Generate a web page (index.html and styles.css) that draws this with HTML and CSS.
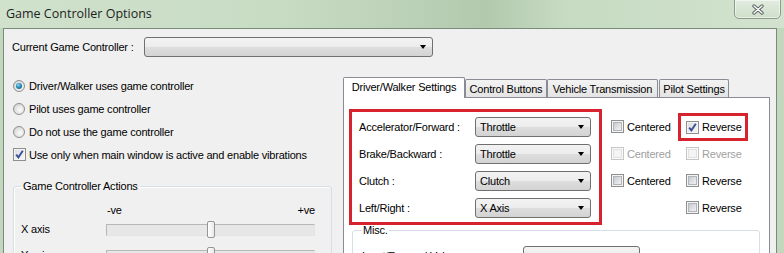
FILE: index.html
```html
<!DOCTYPE html>
<html lang="en">
<head>
    <meta charset="UTF-8">
    <title>Game Controller Options</title>
    <link rel="stylesheet" href="styles.css">
</head>
<body>
    <div class="titlebar">
        <span class="title">Game Controller Options</span>
        <button class="close" title="Close">
            <svg width="12" height="11" viewBox="0 0 12 11">
                <path d="M2 2 L10 9 M10 2 L2 9" stroke="#5b6360" stroke-width="3.4" stroke-linecap="round"/>
                <path d="M2 2 L10 9 M10 2 L2 9" stroke="#fff" stroke-width="1.4" stroke-linecap="round"/>
            </svg>
        </button>
    </div>

    <div class="client">
        <div class="controller-row">
            <label class="controller-label">Current Game Controller :</label>
            <div class="combo combo-wide"></div>
        </div>

        <div class="main">
            <div class="left">
                <div class="opt"><span class="radio on"></span>Driver/Walker uses game controller</div>
                <div class="opt"><span class="radio"></span>Pilot uses game controller</div>
                <div class="opt"><span class="radio"></span>Do not use the game controller</div>
                <div class="opt"><span class="chk on"><svg width="11" height="11" viewBox="0 0 11 11"><path d="M2.2 5.6 L4.4 8.3 L8.8 1.8" fill="none" stroke="#3b4f94" stroke-width="1.9"/></svg></span>Use only when main window is active and enable vibrations</div>

                <fieldset class="group actions">
                    <legend>Game Controller Actions</legend>
                    <div class="axis-grid">
                        <span></span>
                        <div class="scale"><span>-ve</span><span>+ve</span></div>
                        <span class="axis-label">X axis</span>
                        <div class="slider"><span class="thumb"></span></div>
                        <span class="axis-label">Y axis</span>
                        <div class="slider"><span class="thumb"></span></div>
                    </div>
                </fieldset>
            </div>

            <div class="tabs">
                <div class="tab-strip">
                    <div class="tab active tab-driver">Driver/Walker Settings</div>
                    <div class="tab tab-buttons">Control Buttons</div>
                    <div class="tab tab-trans">Vehicle Transmission</div>
                    <div class="tab tab-pilot">Pilot Settings</div>
                </div>
                <div class="tab-panel">
                    <div class="assign-row">
                        <div class="assign highlight">
                            <span class="assign-label">Accelerator/Forward :</span>
                            <div class="combo">Throttle</div>
                            <span class="assign-label">Brake/Backward :</span>
                            <div class="combo">Throttle</div>
                            <span class="assign-label">Clutch :</span>
                            <div class="combo">Clutch</div>
                            <span class="assign-label">Left/Right :</span>
                            <div class="combo">X Axis</div>
                        </div>

                        <div class="flags">
                            <div class="flag"><span class="chk"></span>Centered</div>
                            <div class="flag reverse highlight"><span class="chk on"><svg width="11" height="11" viewBox="0 0 11 11"><path d="M2.2 5.6 L4.4 8.3 L8.8 1.8" fill="none" stroke="#3b4f94" stroke-width="1.9"/></svg></span>Reverse</div>
                            <div class="flag disabled"><span class="chk"></span>Centered</div>
                            <div class="flag reverse disabled"><span class="chk"></span>Reverse</div>
                            <div class="flag"><span class="chk"></span>Centered</div>
                            <div class="flag reverse"><span class="chk"></span>Reverse</div>
                            <div class="flag"></div>
                            <div class="flag reverse"><span class="chk"></span>Reverse</div>
                        </div>
                    </div>

                    <fieldset class="group misc">
                        <legend>Misc.</legend>
                        <div class="misc-row">
                            <span class="misc-label">Input/Forward Value :</span>
                            <div class="combo combo-misc"></div>
                        </div>
                    </fieldset>
                </div>
            </div>
        </div>
    </div>
</body>
</html>
```

FILE: styles.css
```css
body {
    margin: 0;
    width: 784px;
    height: 253px;
    overflow: hidden;
    background: #c3d7bf;
    font-family: "Liberation Sans", Arial, sans-serif;
    font-size: 11px;
    letter-spacing: -0.2px;
    color: #000;
}

/* title bar */
.titlebar {
    height: 28px;
    display: flex;
    align-items: flex-start;
    background: linear-gradient(90deg, #d0e1cc 0%, #c8dcc4 35%, #b9cfb5 55%, #b3c9ae 62%, #c6dbc2 72%, #d2e2ce 100%);
}
.title {
    margin: 5px 0 0 6px;
    font-family: "Open Sans", "Noto Sans", sans-serif;
    font-size: 12.5px;
    letter-spacing: 0;
    line-height: 18px;
    color: #1e1e1e;
}
.close {
    margin: -1px 3px 0 auto;
    width: 47px;
    height: 20px;
    padding: 0;
    display: flex;
    align-items: center;
    justify-content: center;
    border: 1px solid #8c9a8a;
    border-radius: 0 0 5px 5px;
    background: linear-gradient(#e2ece0, #cfdfcb);
    box-shadow: inset 0 0 0 1px rgba(255, 255, 255, 0.5);
}

/* window body */
.client {
    margin: 0 7px 0 3px;
    height: 225px;
    border: 1px solid #7b8b79;
    border-bottom: none;
    background: #f0f0f0;
}
.controller-row {
    display: flex;
    align-items: center;
    padding: 8px 0 0 8px;
}
.controller-label {
    width: 132px;
}

/* combo boxes */
.combo {
    height: 20px;
    box-sizing: border-box;
    display: flex;
    align-items: center;
    padding: 0 0 0 4px;
    border: 1px solid #707070;
    border-radius: 3px;
    background: linear-gradient(#f3f3f3 0%, #ececec 50%, #dedede 50%, #d3d3d3 100%);
    white-space: nowrap;
}
.combo::after {
    content: "";
    margin: 0 6px 0 auto;
    border-left: 3.5px solid transparent;
    border-right: 3.5px solid transparent;
    border-top: 4px solid #000;
}
.combo-wide {
    width: 289px;
}

.main {
    display: flex;
    margin-top: 17px;
}

/* left column */
.left {
    width: 321px;
    padding-left: 8px;
}
.opt {
    height: 23px;
    display: flex;
    align-items: center;
    white-space: nowrap;
}
.radio {
    width: 12px;
    height: 12px;
    box-sizing: border-box;
    margin: 0 4px 0 1px;
    border: 1px solid #8f8f8f;
    border-radius: 50%;
    background: radial-gradient(circle at 60% 60%, #fbfbfb 0%, #e2e2e2 55%, #c9c9c9 100%);
    display: flex;
    align-items: center;
    justify-content: center;
}
.radio.on::before {
    content: "";
    width: 6px;
    height: 6px;
    border-radius: 50%;
    background: radial-gradient(circle at 40% 35%, #8fdcf3 0%, #2a8cb7 45%, #0e4d70 100%);
}
.chk {
    width: 13px;
    height: 13px;
    box-sizing: border-box;
    flex: none;
    border: 1px solid #8e8f8f;
    background: linear-gradient(135deg, #b9bec4 0%, #e4e6e8 60%, #f6f6f6 100%);
    box-shadow: inset 0 0 0 1px #f4f4f4, inset 0 0 0 2px #b2b6bb;
}
.chk.on {
    background: linear-gradient(135deg, #d9dde2, #f7f7f7);
    box-shadow: inset 0 0 0 1px #f4f4f4;
}
.chk svg {
    display: block;
    margin: 0;
}
.opt .chk {
    margin: 0 3px 0 1px;
}

/* group boxes */
.group {
    margin: 0;
    border: 1px solid #d5dfe5;
    border-radius: 3px;
    box-shadow: inset 1px 1px 0 #fff;
}
.group legend {
    padding: 0 2px;
    line-height: 13px;
}
.actions {
    margin: 14px 0 0 1px;
    width: 319px;
    box-sizing: border-box;
    padding: 10px 16px 0 7px;
}
.axis-grid {
    display: grid;
    grid-template-columns: 85px 209px;
    grid-template-rows: 13px 26px 26px;
    align-items: center;
}
.scale {
    display: flex;
    justify-content: space-between;
    padding-left: 1px;
}
.slider {
    position: relative;
    height: 12px;
    box-sizing: border-box;
    border: 1px solid #b7b7b7;
    border-right-color: #e3e3e3;
    border-bottom-color: #e3e3e3;
    background: #e7e7e7;
    margin-top: 1px;
}
.thumb {
    position: absolute;
    left: 100px;
    top: -4px;
    width: 8px;
    height: 17px;
    box-sizing: border-box;
    border: 1px solid #959595;
    border-radius: 2px;
    background: linear-gradient(90deg, #ffffff, #e9e9e9);
}

/* tab control */
.tabs {
    width: 427px;
    margin: 3px 0 0 10px;
}
.tab-strip {
    display: flex;
    align-items: flex-end;
    height: 20px;
}
.tab {
    height: 18px;
    box-sizing: border-box;
    display: flex;
    align-items: center;
    justify-content: center;
    border: 1px solid #898c95;
    border-bottom: none;
    border-radius: 2px 2px 0 0;
    background: linear-gradient(#f3f3f3, #e4e4e4);
    white-space: nowrap;
}
.tab.active {
    height: 21px;
    margin-bottom: -1px;
    position: relative;
    z-index: 1;
    background: #fff;
    padding-bottom: 2px;
}
.tab-driver { width: 122px; }
.tab-buttons { width: 82px; }
.tab-trans { width: 111px; }
.tab-pilot { width: 70px; margin-left: 1px; }

.tab-panel {
    height: 160px;
    border: 1px solid #898c95;
    background: #fff;
}
.assign-row {
    display: flex;
    align-items: flex-start;
    padding: 11px 0 0 5px;
}
.highlight {
    border: 3px solid #d6232d;
}
.assign {
    display: grid;
    grid-template-columns: 116px 116px;
    grid-auto-rows: 20px;
    row-gap: 7px;
    align-items: center;
    padding: 5px 8px 4px 7px;
}
.flags {
    display: grid;
    grid-template-columns: 67px 70px;
    grid-auto-rows: 27px;
    margin: 4px 0 0 9px;
}
.flag {
    display: flex;
    align-items: center;
    gap: 3px;
}
.flag.reverse {
    box-sizing: border-box;
    padding-left: 5px;
    border: 3px solid transparent;
}
.flag.reverse.highlight {
    border-color: #d6232d;
    height: 28px;
}
.flag.disabled {
    color: #a0a0a0;
}
.flag.disabled .chk {
    border-color: #c6c6c6;
    background: #f4f4f4;
    box-shadow: inset 0 0 0 1px #fafafa, inset 0 0 0 2px #e1e1e1;
}

.misc {
    margin: -1px 9px 0 8px;
    padding: 9px 0 0 9px;
}
.misc legend {
    padding: 0 1px;
}
.misc-row {
    display: flex;
    align-items: center;
}
.misc-label {
    width: 161px;
}
.combo-misc {
    width: 117px;
}
```
